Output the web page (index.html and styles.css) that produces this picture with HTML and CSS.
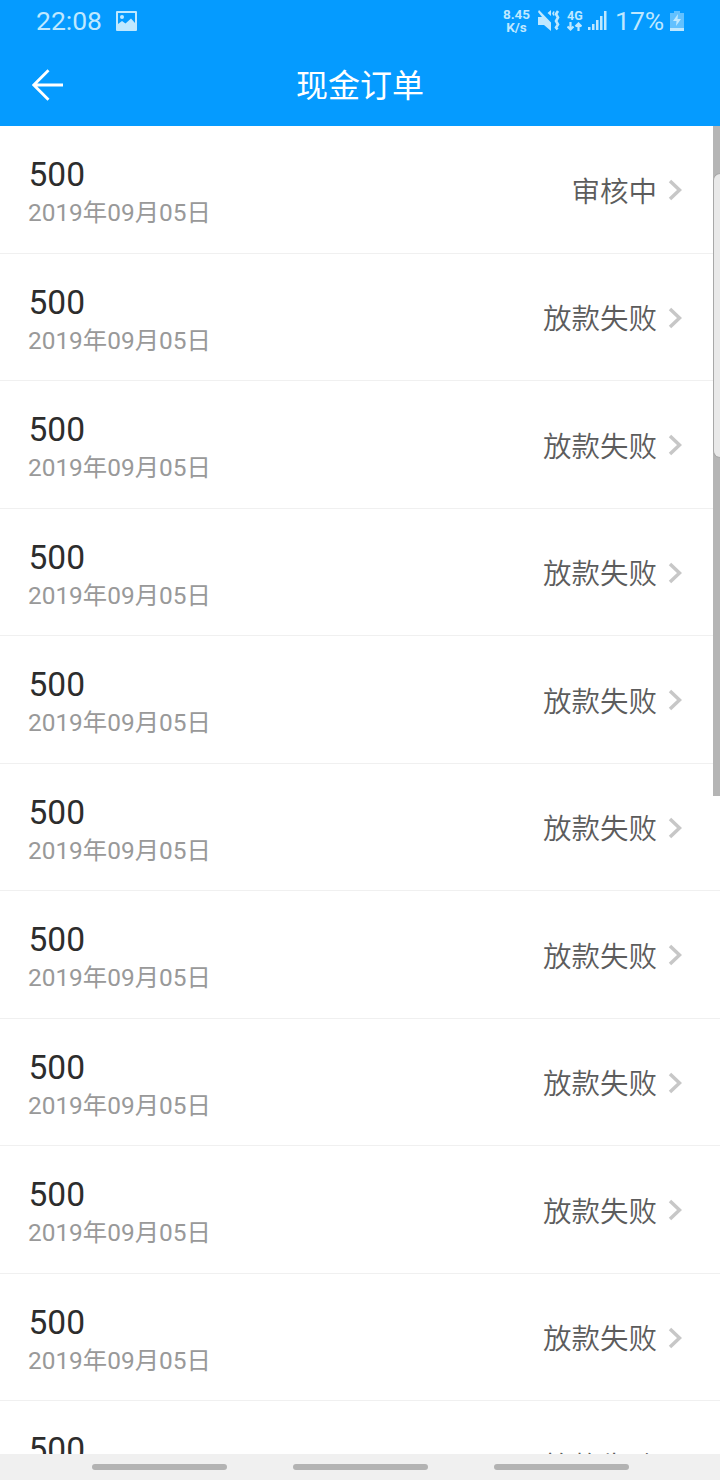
FILE: index.html
```html
<!DOCTYPE html>
<html lang="zh-CN">
<head>
    <meta charset="UTF-8">
    <title>现金订单</title>
    <link rel="stylesheet" href="styles.css">
</head>
<body>
<div class="app">
    <div class="status-bar">
        <span class="time">22:08</span>
        <svg class="icon-pic" width="21" height="20" viewBox="0 0 21 20">
            <path fill="currentColor" fill-rule="evenodd" d="M1 0h19a1 1 0 0 1 1 1v18a1 1 0 0 1-1 1H1a1 1 0 0 1-1-1V1a1 1 0 0 1 1-1zM2 2v11l4-3 3.500 2.500 5.500-5 4 4.500V2z"/>
            <circle fill="currentColor" cx="6" cy="6" r="2"/>
        </svg>
        <div class="speed"><span>8.45</span><span>K/s</span></div>
        <svg class="icon-mute" width="22" height="22" viewBox="0 0 22 22">
            <path fill="currentColor" d="M1 0l12 12.500V21l-7-6H0V7h4L0 2zM13 0v6L9.500 3z"/>
            <path fill="none" stroke="currentColor" stroke-width="1.600" d="M16 1.500l-1 2 1 2"/>
            <path fill="none" stroke="currentColor" stroke-width="2.600" d="M20 1l-2 3 2 3.500-2 3.500 2 3.500-2 3 1.500 2"/>
        </svg>
        <div class="net">
            <span>4G</span>
            <svg width="15" height="10" viewBox="0 0 15 10">
                <path fill="none" stroke="currentColor" stroke-width="2.200" d="M3.500 0v8M.500 4.500l3 3 3-3M11.500 9V1M8.500 4.500l3-3 3 3"/>
            </svg>
        </div>
        <svg class="icon-signal" width="19" height="20" viewBox="0 0 19 20">
            <path fill="currentColor" d="M0 16h2.500v3H0zM4 13h2.500v6H4zM8 9h2.500v10H8zM12 5h2.500v14H12zM16 0h2.500v19H16z"/>
        </svg>
        <span class="percent">17%</span>
        <svg class="icon-battery" width="14" height="21" viewBox="0 0 14 21">
            <path fill="currentColor" opacity=".5" d="M4 0h6v2h4v15H0V2h4z"/>
            <path fill="currentColor" d="M0 17h14v3H0zM8 3l-5 7h3.500L6 15l5-7H7.500z"/>
        </svg>
    </div>
    <div class="header">
        <svg class="back" width="32" height="32" viewBox="0 0 32 32">
            <path fill="none" stroke="#fff" stroke-width="2.800" d="M31 16H2M16.500 1.200L1.800 16l14.700 14.800"/>
        </svg>
        <h1>现金订单</h1>
    </div>
    <div class="list" id="list"></div>
    <div class="scrollbar"></div>
    <div class="edge-handle"></div>
    <div class="nav-bar">
        <i></i>
        <i></i>
        <i></i>
    </div>
</div>
<script>
    var list = document.getElementById("list");
    var orders = [{money: "500", date: "2019年09月05日", state: "审核中"}];
    for (var i = 0; i < 10; i++) {
        orders.push({money: "500", date: "2019年09月05日", state: "放款失败"});
    }
    var html = "";
    for (var i = 0; i < orders.length; i++) {
        html += '<div class="order">' +
            '<div class="info">' +
            '<p class="money">' + orders[i].money + '</p>' +
            '<p class="date">' + orders[i].date + '</p>' +
            '</div>' +
            '<span class="state">' + orders[i].state + '</span>' +
            '<svg class="arrow" width="14" height="22" viewBox="0 0 14 22"><path d="M2 2l9.500 9L2 20"/></svg>' +
            '</div>';
    }
    list.innerHTML = html;
</script>
</body>
</html>
```
FILE: styles.css
```css
*{
    margin:0;
    padding:0;
    box-sizing:border-box;
}
body{
    font-family:Roboto,"Noto Sans CJK SC",sans-serif;
    background:#fff;
}
.app{
    position:relative;
    display:flex;
    flex-direction:column;
    height:1480px;
    overflow:hidden;
}
.status-bar{
    display:flex;
    align-items:center;
    height:42px;
    padding-left:36px;
    background:#059bff;
    color:#bfe8ff;
}
.status-bar svg{
    display:block;
    flex:none;
}
.time{
    width:80px;
    margin-top:-1px;
    font-size:26.5px;
}
.speed{
    display:flex;
    flex-direction:column;
    align-items:center;
    width:29px;
    margin-left:365px;
    font-size:13.5px;
    font-weight:700;
    line-height:13px;
}
.icon-mute{
    margin-left:7px;
}
.net{
    width:16px;
    margin-left:7px;
    font-size:12.5px;
    font-weight:700;
    line-height:12px;
}
.net span{
    display:block;
}
.icon-signal{
    margin-left:5px;
}
.percent{
    width:49px;
    margin:-1px 0 0 8px;
    font-size:26.5px;
}
.icon-battery{
    margin-left:6px;
}
.header{
    display:flex;
    align-items:center;
    height:84px;
    padding:1px 32px 0;
    background:#059bff;
}
.header h1{
    flex:1;
    margin-right:32px;
    padding-top:2px;
    text-align:center;
    font-size:32px;
    font-weight:400;
    line-height:80px;
    color:#fff;
}
.list{
    flex:1;
    min-height:0;
    overflow:hidden;
}
.order{
    display:flex;
    align-items:center;
    height:127.5px;
    padding:2px 38px 0 28px;
    border-bottom:1px solid #f0f0f0;
}
.info{
    flex:1;
    padding-top:6px;
}
.money{
    padding-left:.5px;
    font-size:33.5px;
    line-height:40px;
    color:#2d2d2d;
}
.date{
    font-size:24.4px;
    line-height:36px;
    color:#999;
}
.state{
    padding-top:5px;
    font-size:28.5px;
    font-weight:350;
    line-height:40px;
    color:#5c5c5c;
}
.arrow{
    margin-left:11px;
}
.arrow path{
    fill:none;
    stroke:#c7c7c7;
    stroke-width:3.5;
}
.scrollbar{
    position:absolute;
    top:126px;
    right:0;
    width:7px;
    height:670px;
    background:#b5b5b5;
}
.edge-handle{
    position:absolute;
    top:173px;
    right:0;
    width:7px;
    height:285px;
    border:1px solid #a8a8a8;
    border-right:0;
    border-radius:7px 0 0 7px;
    background:#e9e9e9;
}
.nav-bar{
    display:flex;
    justify-content:center;
    align-items:center;
    gap:66px;
    height:26px;
    background:#f0f0f0;
}
.nav-bar i{
    width:135px;
    height:6px;
    border-radius:3px;
    background:#b3b3b3;
}
```
